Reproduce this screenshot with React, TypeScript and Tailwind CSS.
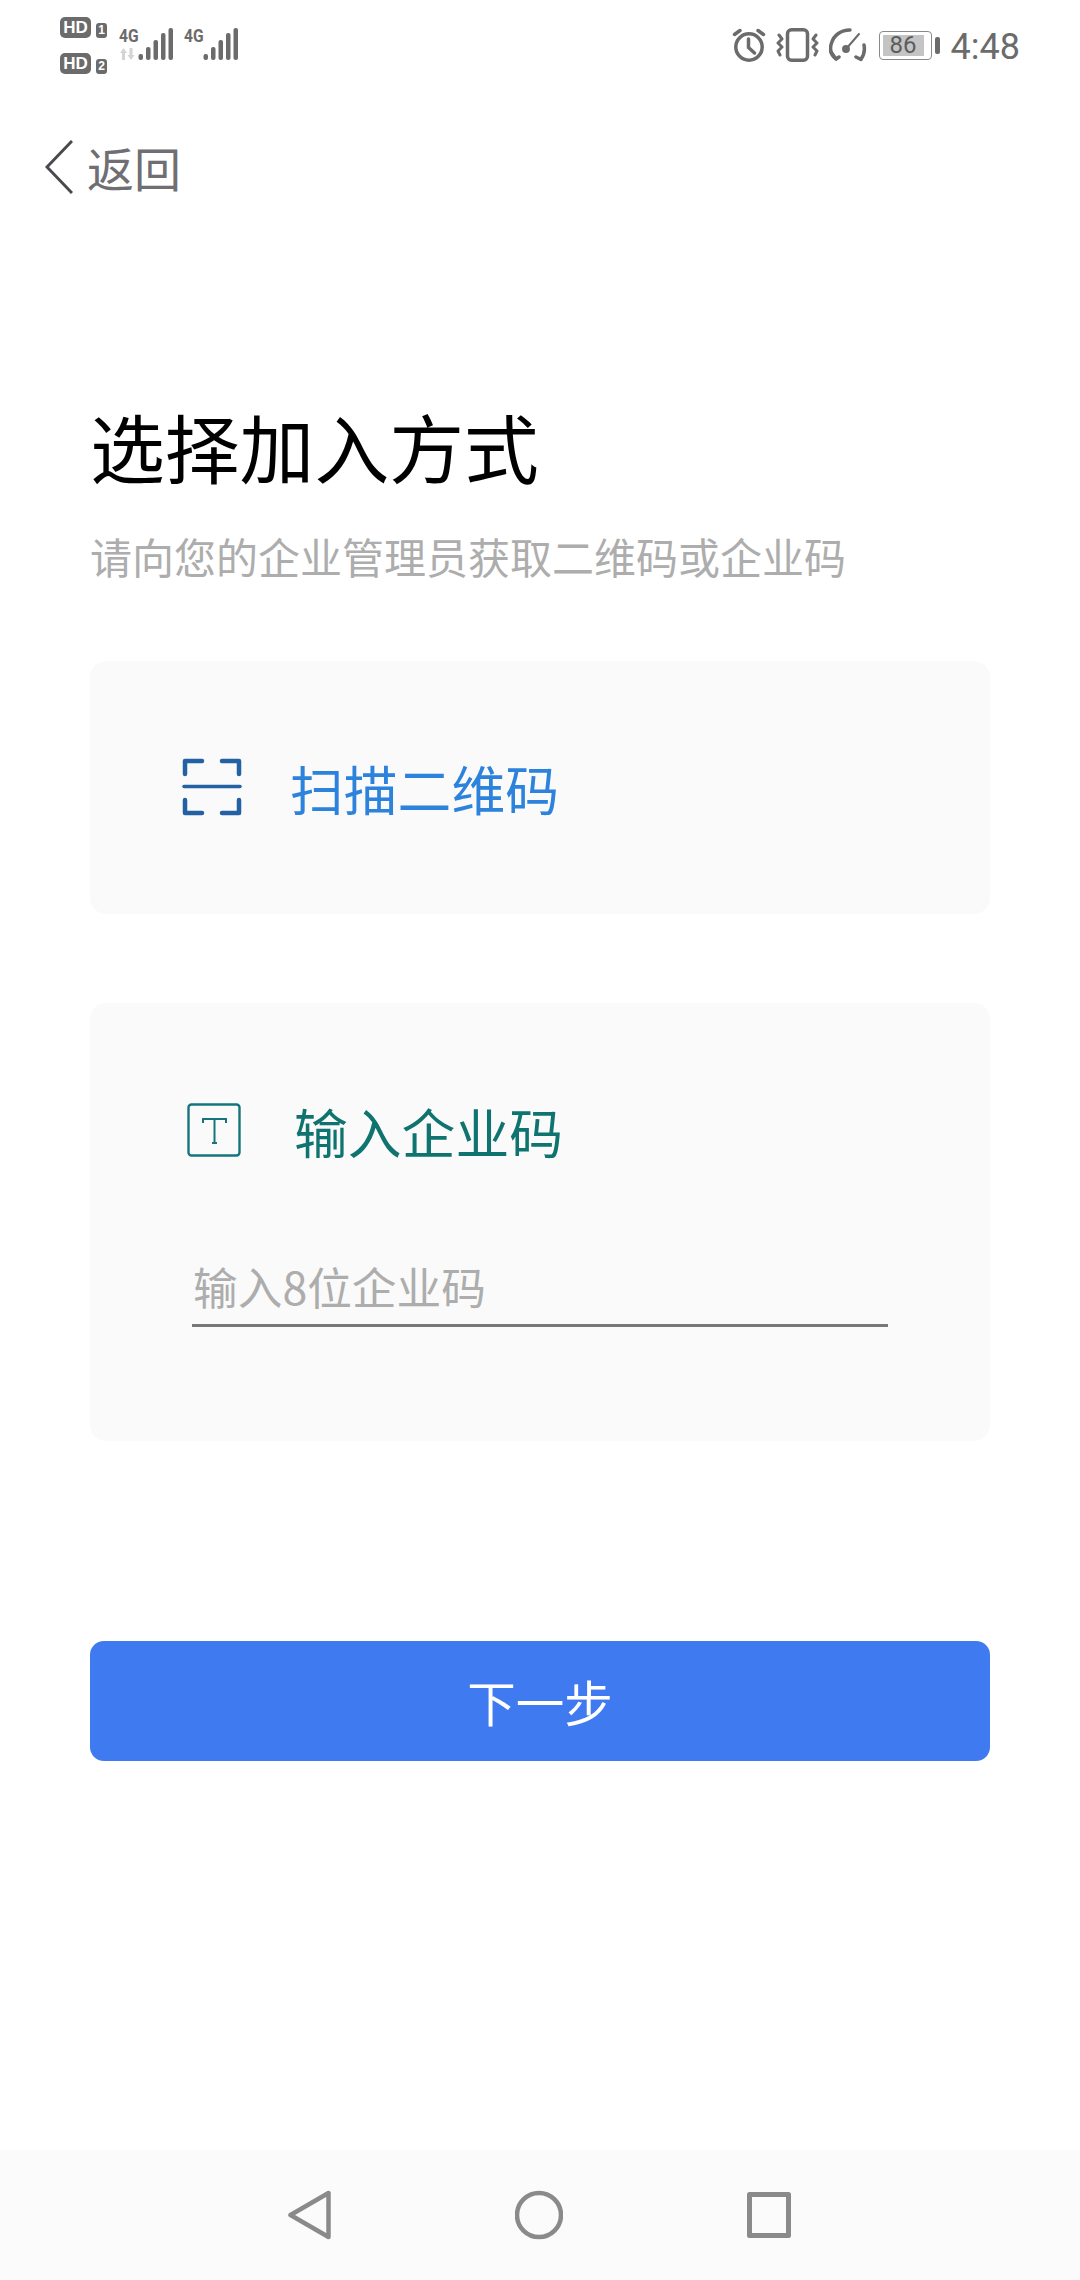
const cjk = { fontFamily: '"Noto Sans CJK SC", "Noto Sans", sans-serif' };

function Bars({ className = "" }: { className?: string }) {
  return (
    <svg width="35" height="32" viewBox="0 0 35 32" className={className} fill="#6b6b6b">
      <rect x="0.5" y="26" width="4.5" height="6" rx="2" />
      <rect x="8" y="19" width="4.5" height="13" rx="2" />
      <rect x="15.5" y="12" width="4.5" height="20" rx="2" />
      <rect x="23" y="5" width="4.5" height="27" rx="2" />
      <rect x="30.5" y="0" width="4.5" height="32" rx="2" />
    </svg>
  );
}

function Hd({ n }: { n: string }) {
  return (
    <div className="flex items-end gap-[5px] h-[22px]">
      <div
        className="w-[31px] h-[21px] rounded-[5px] bg-[#6b6b6b] text-white text-[17px] leading-[21px] font-bold text-center"
        style={{ fontFamily: '"Liberation Sans", sans-serif' }}
      >
        HD
      </div>
      <div
        className="w-[11px] h-[15px] rounded-[3px] bg-[#6b6b6b] text-white text-[12px] leading-[15px] font-bold text-center"
        style={{ fontFamily: '"Liberation Sans", sans-serif' }}
      >
        {n}
      </div>
    </div>
  );
}

function Net() {
  return (
    <div className="relative w-[54px] h-[32px]">
      <span
        className="absolute left-0 top-[-3px] text-[#6b6b6b] text-[19px] leading-[22px] font-bold origin-left scale-x-[0.82]"
        style={{ fontFamily: '"Roboto", sans-serif' }}
      >
        4G
      </span>
      <Bars className="absolute right-0 top-0" />
    </div>
  );
}

function StatusBar() {
  return (
    <div className="h-[90px] flex justify-between pl-[60px] pr-[60px] text-[#6b6b6b]">
      <div className="flex gap-[12px]">
        <div className="flex flex-col gap-[14px] pt-[16px]">
          <Hd n="1" />
          <Hd n="2" />
        </div>
        <div className="flex gap-[11px] pt-[28px]">
          <div className="relative">
            <Net />
            <svg width="15" height="12" viewBox="0 0 15 12" className="absolute left-[1px] top-[20px]" fill="#d4d4d4">
              <path d="M3.5 0 L7 5 H5 V12 H2 V5 H0 Z M11 12 L7.5 7 H9.5 V0 H12.5 V7 H14.5 Z" />
            </svg>
          </div>
          <Net />
        </div>
      </div>
      <div className="flex items-start pt-[28px]">
        <svg width="34" height="34" viewBox="0 0 34 34" fill="none" stroke="#6b6b6b" strokeWidth="3.5" strokeLinecap="round" className="mr-[10px]">
          <circle cx="17" cy="19" r="13.2" />
          <path d="M16.5 11 V19.5 L22.5 25" />
          <path d="M2.5 6.5 L8 2.5 M31.5 6.5 L26 2.5" />
        </svg>
        <svg width="43" height="34" viewBox="0 0 43 34" fill="none" stroke="#6b6b6b" strokeWidth="3.5" strokeLinecap="round" strokeLinejoin="round" className="mr-[10px]">
          <rect x="11.5" y="1.8" width="20" height="30.4" rx="4" />
          <path d="M3 7 L6 11 L2 15 L6 19 L2 23 L4 27" strokeWidth="3" />
          <path d="M40 7 L37 11 L41 15 L37 19 L41 23 L39 27" strokeWidth="3" />
        </svg>
        <svg width="38" height="34" viewBox="0 0 38 34" fill="none" stroke="#6b6b6b" strokeWidth="3.5" strokeLinecap="round" strokeLinejoin="round" className="mr-[12px]">
          <path d="M7 31 C2 27 0.5 21 2.5 15 C5 7 12 2 21 2" />
          <path d="M2 24 L7 31 L10 29" />
          <path d="M32 31 C35 27 36 22 35 17" />
          <path d="M27 29 L32 31.5" />
          <path d="M17 21 L30 6" strokeWidth="2" />
          <circle cx="17" cy="21" r="2.2" fill="#6b6b6b" />
        </svg>
        <div className="flex items-center mt-[3px]">
          <div className="w-[53px] h-[29px] rounded-[4px] border border-[#8a8a8a] p-[3px] flex">
            <div
              className="w-[41px] h-[21px] bg-[#c4c4c4] text-[#5c5c5c] text-[24px] leading-[21px] text-center"
              style={{ fontFamily: '"Roboto", sans-serif' }}
            >
              86
            </div>
          </div>
          <div className="w-[5px] h-[17px] ml-[3px] rounded-[2px] bg-[#6b6b6b]" />
        </div>
        <div
          className="ml-[11px] text-[36px] leading-[36px] mt-[1px] text-[#6b6b6b]"
          style={{ fontFamily: '"Roboto", sans-serif' }}
        >
          4:48
        </div>
      </div>
    </div>
  );
}

export default function App() {
  return (
    <div className="w-[1080px] h-[2280px] bg-[#ffffff] flex flex-col overflow-hidden" style={cjk}>
      <StatusBar />

      <div className="h-[78px] mt-[38px] flex items-center pl-[45px]">
        <svg width="28" height="54" viewBox="0 0 28 54" fill="none" stroke="#4a4a4e" strokeWidth="3">
          <path d="M27 1 L2 27 L27 53" />
        </svg>
        <span className="ml-[14px] text-[47px] leading-[60px] text-[#6e6e73]">返回</span>
      </div>

      <div className="px-[90px] flex flex-col flex-1">
        <h1 className="mt-[195px] text-[74.8px] leading-[90px] text-black font-normal">选择加入方式</h1>
        <p className="mt-[37px] text-[42px] leading-[56px] text-[#adadad]">请向您的企业管理员获取二维码或企业码</p>

        <div className="mt-[77px] h-[253px] rounded-[16px] bg-[#fafafa] flex items-start pl-[92px] pt-[97px]">
          <svg width="60" height="58" viewBox="0 0 60 58" fill="none" stroke="#2461a3" strokeWidth="4.5" strokeLinecap="round" strokeLinejoin="round">
            <path d="M3 16 V3 H20 M40 3 H57 V16" />
            <path d="M2 28.5 H58" strokeWidth="3.5" />
            <path d="M3 42 V55 H20 M40 55 H57 V42" />
          </svg>
          <span className="ml-[48px] text-[53.8px] leading-[66px] -mt-[3px] text-[#2d82dc]">扫描二维码</span>
        </div>

        <div className="mt-[89px] h-[438px] rounded-[16px] bg-[#fafafa] pt-[100px] pl-[97px] pr-[102px]">
          <div className="flex items-start">
            <svg width="54" height="54" viewBox="0 0 54 54" fill="none" stroke="#16757a" strokeWidth="2.4">
              <rect x="1.5" y="1.5" width="51" height="51" rx="3" />
              <path d="M16 20 V16 H39 V20 M27.5 16 V40 M25 40 H30" strokeWidth="2" />
            </svg>
            <span className="ml-[53px] text-[53.8px] leading-[66px] -mt-[5px] text-[#0f7370]">输入企业码</span>
          </div>
          <div className="mt-[92px] ml-[5px] border-b-[3px] border-[#777777] h-[71px] pl-[1px] text-[44.7px] leading-[60px] text-[#adadad]">
            输入8位企业码
          </div>
        </div>

        <button className="mt-[200px] h-[120px] rounded-[14px] bg-[#3f7af0] text-white text-[48.5px] leading-[119px] text-center">
          下一步
        </button>
      </div>

      <div className="h-[130px] bg-[#fbfbfb]">
        <div className="h-full flex items-center justify-between pl-[288px] pr-[289px]">
          <svg width="43" height="50" viewBox="0 0 43 50" fill="none" stroke="#8a8a8a" strokeWidth="4.5" strokeLinejoin="round">
            <path d="M40.5 3 V47 L2.5 25 Z" />
          </svg>
          <svg width="48" height="50" viewBox="0 0 48 50" fill="none" stroke="#8a8a8a" strokeWidth="4.5">
            <circle cx="24" cy="25" r="22" />
          </svg>
          <svg width="44" height="46" viewBox="0 0 44 46" fill="none" stroke="#8a8a8a" strokeWidth="5" strokeLinejoin="round">
            <rect x="2.5" y="2.5" width="39" height="41" />
          </svg>
        </div>
      </div>
    </div>
  );
}
